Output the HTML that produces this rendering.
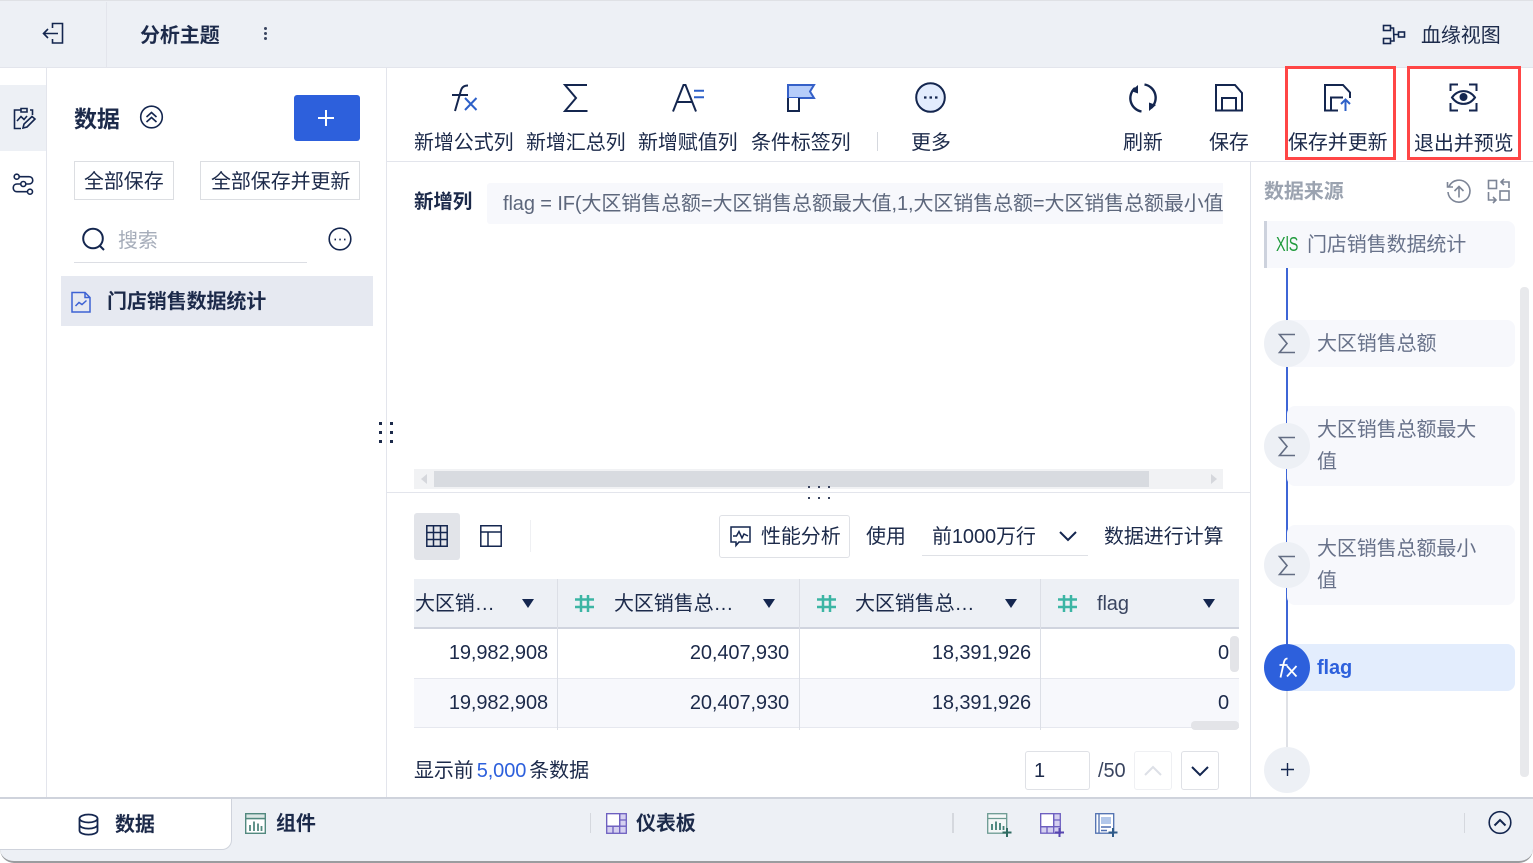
<!DOCTYPE html>
<html lang="zh"><head><meta charset="utf-8"><title>分析主题</title>
<style>
html,body{margin:0;padding:0;background:#fff}
#p{position:relative;width:1533px;height:863px;overflow:hidden;font-family:"Liberation Sans","Noto Sans CJK SC",sans-serif;font-size:20px;color:#1c2a4a}
.a{position:absolute;box-sizing:border-box}
.t{position:absolute;white-space:nowrap;line-height:30px;height:30px;margin-top:1px;letter-spacing:-.1px}
.b{font-weight:bold}
svg{position:absolute;overflow:visible;fill:none;stroke:#14264f;stroke-width:1.6}
.g{color:#68728a}
</style></head><body><div id="p">

<!-- top bar -->
<div class="a" style="left:0;top:0;width:1533px;height:68px;background:#edf0f5;border-top:1px solid #dfe1e5;border-bottom:1px solid #e3e5ec"></div>
<div class="a" style="left:106px;top:2px;width:1px;height:65px;background:#e3e5ec"></div>
<svg style="left:40px;top:20px" width="26" height="26"><path d="M12.500 8V3.500H22.500V23H12.500V19M3.500 13.500H18M8 9L3.500 13.500L8 18"/></svg>
<div class="t b" style="left:140px;top:20px">分析主题</div>
<div class="a" style="left:264px;top:27px;width:3px;height:3px;background:#3a4560;border-radius:50%"></div>
<div class="a" style="left:264px;top:32px;width:3px;height:3px;background:#3a4560;border-radius:50%"></div>
<div class="a" style="left:264px;top:37px;width:3px;height:3px;background:#3a4560;border-radius:50%"></div>
<svg style="left:1382px;top:24px" width="24" height="22"><rect x="1.500" y="1.500" width="7" height="5"/><rect x="1.500" y="14.500" width="7" height="5"/><rect x="16.500" y="8" width="6" height="5"/><path d="M8.500 4H11.500L12 17H8.500M12 10.500H16.500"/></svg>
<div class="t" style="left:1421px;top:20px">血缘视图</div>

<!-- left rail -->
<div class="a" style="left:46px;top:68px;width:1px;height:730px;background:#e3e5ec"></div>
<div class="a" style="left:0;top:85px;width:46px;height:66px;background:#edf0f5"></div>
<svg style="left:12px;top:106px" width="25" height="25"><path d="M9 4H2.500V22.500H9M18 4H20.500V9M9 2.500H15V6H9zM5 15L9 10.500L12 13.500L15 10M11 22L12 18L20 10.500L23 13L15 21Z"/></svg>
<svg style="left:12px;top:173px" width="24" height="23"><circle cx="4.700" cy="3.700" r="2.500"/><circle cx="18" cy="18.700" r="2.500"/><circle cx="11.300" cy="11" r="2.500"/><path d="M7.200 3.700H17C22 3.700 22 11 17 11H13.800M8.800 11H5C0 11 0 18.700 5 18.700H15.500"/></svg>

<!-- data panel -->
<div class="a" style="left:386px;top:68px;width:1px;height:730px;background:#e3e5ec"></div>
<div class="t b" style="left:74px;top:103px;font-size:23px">数据</div>
<svg style="left:139px;top:105px" width="24" height="24"><circle cx="12.500" cy="12" r="10.800"/><path d="M7.500 12L12.500 7.500L17.500 12M7.500 17L12.500 12.500L17.500 17"/></svg>
<div class="a" style="left:294px;top:95px;width:66px;height:46px;background:#2d60dc;border-radius:3px"></div>
<svg style="left:317px;top:109px;stroke:#fff;stroke-width:2" width="18" height="18"><path d="M1 9H17M9 1V17"/></svg>
<div class="a" style="left:74px;top:161px;width:100px;height:39px;border:1px solid #dcdee2"></div>
<div class="t" style="left:84px;top:166px">全部保存</div>
<div class="a" style="left:200px;top:161px;width:160px;height:39px;border:1px solid #dcdee2"></div>
<div class="t" style="left:211px;top:166px">全部保存并更新</div>
<svg style="left:81px;top:227px;stroke-width:2" width="24" height="24"><circle cx="12" cy="11.500" r="9.800"/><path d="M18.500 18.500L23 23"/></svg>
<div class="t" style="left:118px;top:225px;color:#a6adba">搜索</div>
<div class="a" style="left:74px;top:262px;width:233px;height:1px;background:#dcdee4"></div>
<svg style="left:328px;top:227px" width="24" height="24"><circle cx="12" cy="12" r="10.800"/><path d="M6.500 12.500H8M11.300 12.500H12.800M16 12.500H17.500" stroke-width="1.800"/></svg>
<div class="a" style="left:61px;top:276px;width:312px;height:50px;background:#e6e9f1"></div>
<svg style="left:70px;top:290px;stroke:#3d62d4;stroke-width:1.500" width="22" height="24"><path d="M2 2.500H15L20 7.500V22H2ZM15 2.500V7.500H20"/><path d="M5.500 16L9 12.500L12 14.500L16.500 10.500"/></svg>
<div class="t b" style="left:107px;top:286px">门店销售数据统计</div>
<div class="a" style="left:379px;top:422px;width:3px;height:3px;background:#1c2a4a"></div>
<div class="a" style="left:390px;top:422px;width:3px;height:3px;background:#1c2a4a"></div>
<div class="a" style="left:379px;top:431px;width:3px;height:3px;background:#1c2a4a"></div>
<div class="a" style="left:390px;top:431px;width:3px;height:3px;background:#1c2a4a"></div>
<div class="a" style="left:379px;top:440px;width:3px;height:3px;background:#1c2a4a"></div>
<div class="a" style="left:390px;top:440px;width:3px;height:3px;background:#1c2a4a"></div>

<!-- toolbar -->
<div class="a" style="left:387px;top:161px;width:1146px;height:1px;background:#e3e5ec"></div>
<svg style="left:449px;top:84px;stroke-width:2" width="30" height="30"><path d="M19 1.500C14 1.500 12.500 4 11.500 8L6 27M3 11H19"/><path d="M16 14L27.500 26M27.500 14L16 26" stroke="#2d60c8" stroke-width="2"/></svg>
<svg style="left:563px;top:84px;stroke-width:2" width="26" height="30"><path d="M24 1H2L13 14L2 27H24.500"/></svg>
<svg style="left:672px;top:84px;stroke-width:2" width="34" height="30"><path d="M1 27.500L11.500 1H13.500L24 27.500M5 18H20"/><path d="M22 6.700H32M22 13.300H32" stroke="#2d60c8" stroke-width="2"/></svg>
<svg style="left:786px;top:84px;stroke-width:2" width="30" height="30"><path d="M2 14V1H28L24 7.500L28 14Z" fill="#b6cdfa" stroke="#3560c8"/><path d="M2 14V27H13V14" stroke="#14264f" fill="#fff"/></svg>
<svg style="left:915px;top:82px;stroke-width:2" width="30" height="30"><circle cx="15.500" cy="15.500" r="14.300" fill="#e3ecfd"/><path d="M9 15.500H11.500M14.500 15.500H17M20 15.500H22.500" stroke-width="2.200"/></svg>
<div class="t" style="left:414px;top:127px">新增公式列</div>
<div class="t" style="left:526px;top:127px">新增汇总列</div>
<div class="t" style="left:638px;top:127px">新增赋值列</div>
<div class="t" style="left:751px;top:127px">条件标签列</div>
<div class="a" style="left:877px;top:132px;width:1px;height:19px;background:#d5d8de"></div>
<div class="t" style="left:911px;top:127px">更多</div>
<svg style="left:1127px;top:82px;stroke-width:2.400" width="32" height="32"><path d="M8 6A13.500 13.500 0 0 0 14.500 29.500M17.500 2.500A13.500 13.500 0 0 1 24 26"/><path d="M11 3V11.500L4 9Z M22 20.500V29L29 23Z" fill="#14264f" stroke="none"/></svg>
<svg style="left:1214px;top:83px;stroke-width:2" width="30" height="30"><path d="M2 2H21L28 10V27.500H2Z"/><path d="M8 27.500V15H22V27.500"/></svg>
<svg style="left:1323px;top:83px;stroke-width:2" width="32" height="30"><path d="M15 27.500H2V2H20L27 9.500V15"/><path d="M8 27.500V14.500H20"/><path d="M22.500 28V17M18 21L22.500 16.500L27 21" stroke="#2d60c8"/></svg>
<svg style="left:1449px;top:83px;stroke-width:2" width="30" height="30"><path d="M1.500 8V1.500H9M20 1.500H27.500V8M1.500 20V27.500H9M20 27.500H27.500V20"/><path d="M3 14.500C9 6 20 6 26 14.500C20 23 9 23 3 14.500Z"/><circle cx="14.500" cy="14" r="3" fill="#14264f"/></svg>
<div class="t" style="left:1123px;top:127px">刷新</div>
<div class="t" style="left:1209px;top:127px">保存</div>
<div class="a" style="left:1285px;top:66px;width:111px;height:94px;border:3px solid #ff4646"></div>
<div class="a" style="left:1407px;top:66px;width:114px;height:94px;border:3px solid #ff4646"></div>
<div class="t" style="left:1288px;top:127px">保存并更新</div>
<div class="t" style="left:1414px;top:128px">退出并预览</div>

<!-- formula -->
<div class="t b" style="left:414px;top:186px;font-size:19.500px">新增列</div>
<div class="a" style="left:487px;top:183px;width:736px;height:41px;background:#f7f8fc;border-radius:3px 0 0 3px;overflow:hidden"><div class="t" style="left:16px;top:5px;color:#5d677c">flag = IF(大区销售总额=大区销售总额最大值,1,大区销售总额=大区销售总额最小值</div></div>
<div class="a" style="left:414px;top:469px;width:809px;height:20px;background:#f1f2f4"></div>
<div class="a" style="left:434px;top:471px;width:715px;height:16px;background:#d8dbe0"></div>
<svg style="left:420px;top:473px;fill:#d5d7dc;stroke:none" width="8" height="12"><path d="M7 1V11L1 6Z"/></svg>
<svg style="left:1210px;top:473px;fill:#d5d7dc;stroke:none" width="8" height="12"><path d="M1 1V11L7 6Z"/></svg>
<div class="a" style="left:387px;top:492px;width:863px;height:1px;background:#e3e5ec"></div>
<svg style="left:808px;top:486px;stroke:#3a4560;stroke-width:2;stroke-dasharray:2 8" width="24" height="14"><path d="M0 1H24M0 12H24"/></svg>

<!-- right panel -->
<div class="a" style="left:1250px;top:162px;width:1px;height:635px;background:#e0e3ea"></div>
<div class="t b" style="left:1264px;top:176px;color:#9ba3b0">数据来源</div>
<svg style="left:1446px;top:179px;stroke:#7d8596" width="26" height="26"><path d="M3 7.500A11 11 0 1 1 2 13M1.500 3V8H7"/><path d="M13 18.500V7.500M8.500 12L13 7.500L17.500 12"/></svg>
<svg style="left:1487px;top:179px;stroke:#7d8596" width="24" height="24"><rect x="1.500" y="1.500" width="8" height="8"/><rect x="13" y="12" width="9" height="9"/><path d="M1.500 13V21H9M14 3H22V9M17 0L14 3L17 6M6 18L9 21L6 24"/></svg>
<div class="a" style="left:1264px;top:221px;width:251px;height:47px;background:#f7f8fc;border-left:3px solid #cdd2dd;border-radius:0 8px 8px 0"></div>
<div class="t" style="left:1276px;top:229px;font-size:20px;color:#1f9a3c;letter-spacing:0;transform:scaleX(.72);transform-origin:0 50%">XlS</div>
<div class="t g" style="left:1307px;top:229px">门店销售数据统计</div>
<div class="a" style="left:1286px;top:268px;width:2px;height:376px;background:#3d65d6"></div>
<div class="a" style="left:1287px;top:320px;width:228px;height:47px;background:#f7f8fc;border-radius:0 8px 8px 0"></div>
<div class="a" style="left:1287px;top:406px;width:228px;height:80px;background:#f7f8fc;border-radius:8px"></div>
<div class="a" style="left:1287px;top:525px;width:228px;height:80px;background:#f7f8fc;border-radius:8px"></div>
<div class="a" style="left:1264px;top:320px;width:46px;height:47px;background:#edf0f5;border-radius:50%"></div>
<div class="a" style="left:1264px;top:423px;width:46px;height:46px;background:#edf0f5;border-radius:50%"></div>
<div class="a" style="left:1264px;top:542px;width:46px;height:46px;background:#edf0f5;border-radius:50%"></div>
<svg style="left:1278px;top:333px;stroke:#636d83" width="18" height="21"><path d="M17 1.500H1.500L9 10.500L1.500 19.500H17"/></svg>
<svg style="left:1278px;top:436px;stroke:#636d83" width="18" height="21"><path d="M17 1.500H1.500L9 10.500L1.500 19.500H17"/></svg>
<svg style="left:1278px;top:555px;stroke:#636d83" width="18" height="21"><path d="M17 1.500H1.500L9 10.500L1.500 19.500H17"/></svg>
<div class="t g" style="left:1317px;top:328px">大区销售总额</div>
<div class="t g" style="left:1317px;top:414px">大区销售总额最大</div>
<div class="t g" style="left:1317px;top:446px">值</div>
<div class="t g" style="left:1317px;top:533px">大区销售总额最小</div>
<div class="t g" style="left:1317px;top:565px">值</div>
<div class="a" style="left:1287px;top:644px;width:228px;height:47px;background:#e3edfd;border-radius:0 8px 8px 0"></div>
<div class="a" style="left:1264px;top:644px;width:46px;height:47px;background:#2d60dc;border-radius:50%"></div>
<svg style="left:1277px;top:657px;stroke:#fff;stroke-width:1.800" width="22" height="22"><path d="M10.500 1.500C8.500 1.500 7.500 3 7 5L3.500 20.500M2.500 8H10.500"/><path d="M10 9L19.500 19.500M19.500 9L10 19.500"/></svg>
<div class="t b" style="left:1317px;top:652px;color:#2d60dc">flag</div>
<div class="a" style="left:1286px;top:691px;width:2px;height:57px;background:#dfe1e6"></div>
<div class="a" style="left:1264px;top:747px;width:46px;height:46px;background:#edf0f5;border-radius:50%"></div>
<svg style="left:1281px;top:763px;stroke-width:1.400" width="13" height="13"><path d="M0 6.500H13M6.500 0V13"/></svg>
<div class="a" style="left:1520px;top:287px;width:9px;height:490px;background:#e8e9ec;border-radius:4px"></div>

<!-- table toolbar -->
<div class="a" style="left:414px;top:513px;width:46px;height:47px;background:#e2e4e9;border-radius:3px"></div>
<svg style="left:426px;top:525px;stroke-width:1.500" width="22" height="22"><path d="M.8 .8H21.200V21.200H.8ZM.8 7.500H21.200M.8 14.500H21.200M7.500 .8V21.200M14.500 .8V21.200"/></svg>
<svg style="left:480px;top:525px;stroke-width:1.500" width="22" height="22"><path d="M.8 .8H21.200V21.200H.8ZM.8 7H21.200M8 7V21.200"/></svg>
<div class="a" style="left:530px;top:520px;width:1px;height:32px;background:#eff0f3"></div>
<div class="a" style="left:719px;top:515px;width:131px;height:43px;border:1px solid #dfe1e6;border-radius:3px"></div>
<svg style="left:730px;top:526px;stroke-width:1.500" width="21" height="21"><path d="M1 1H20V16H9L6 19.500V16H1Z"/><path d="M3 10H6.500L9 5.500L12 12L14 8L18 10"/></svg>
<div class="t" style="left:761px;top:521px">性能分析</div>
<div class="t" style="left:866px;top:521px">使用</div>
<div class="t" style="left:932px;top:521px">前1000万行</div>
<svg style="left:1059px;top:530px;stroke-width:2" width="18" height="12"><path d="M1 2L9 10L17 2"/></svg>
<div class="a" style="left:922px;top:555px;width:166px;height:1px;background:#dfe1e6"></div>
<div class="t" style="left:1104px;top:521px">数据进行计算</div>

<!-- table -->
<div class="a" style="left:414px;top:579px;width:825px;height:48px;background:#edf0f5"></div>
<div class="a" style="left:414px;top:627px;width:825px;height:2px;background:#d0d4de"></div>
<div class="a" style="left:414px;top:629px;width:825px;height:50px;background:#fff;border-bottom:1px solid #e6e8ef"></div>
<div class="a" style="left:414px;top:679px;width:825px;height:49px;background:#f7f8fc;border-bottom:1px solid #e6e8ef"></div>
<div class="a" style="left:557px;top:579px;width:1px;height:151px;background:#dcdfe6"></div>
<div class="a" style="left:799px;top:579px;width:1px;height:151px;background:#dcdfe6"></div>
<div class="a" style="left:1040px;top:579px;width:1px;height:151px;background:#dcdfe6"></div>
<div class="t" style="left:415px;top:588px">大区销…</div>
<div class="t" style="left:614px;top:588px">大区销售总…</div>
<div class="t" style="left:855px;top:588px">大区销售总…</div>
<div class="t" style="left:1097px;top:588px;color:#3a4560">flag</div>
<svg style="left:522px;top:599px;fill:#14264f;stroke:none" width="12" height="10"><path d="M0 0H12L6 9Z"/></svg>
<svg style="left:763px;top:599px;fill:#14264f;stroke:none" width="12" height="10"><path d="M0 0H12L6 9Z"/></svg>
<svg style="left:1005px;top:599px;fill:#14264f;stroke:none" width="12" height="10"><path d="M0 0H12L6 9Z"/></svg>
<svg style="left:1203px;top:599px;fill:#14264f;stroke:none" width="12" height="10"><path d="M0 0H12L6 9Z"/></svg>
<svg style="left:575px;top:595px;stroke:#3cb5a4;stroke-width:2.500" width="19" height="17"><path d="M0 4.500H19M0 12H19M6 0V17M13 0V17"/></svg>
<svg style="left:817px;top:595px;stroke:#3cb5a4;stroke-width:2.500" width="19" height="17"><path d="M0 4.500H19M0 12H19M6 0V17M13 0V17"/></svg>
<svg style="left:1058px;top:595px;stroke:#3cb5a4;stroke-width:2.500" width="19" height="17"><path d="M0 4.500H19M0 12H19M6 0V17M13 0V17"/></svg>
<div class="t" style="right:985px;top:637px">19,982,908</div>
<div class="t" style="right:744px;top:637px">20,407,930</div>
<div class="t" style="right:502px;top:637px">18,391,926</div>
<div class="t" style="right:304px;top:637px">0</div>
<div class="t" style="right:985px;top:687px">19,982,908</div>
<div class="t" style="right:744px;top:687px">20,407,930</div>
<div class="t" style="right:502px;top:687px">18,391,926</div>
<div class="t" style="right:304px;top:687px">0</div>
<div class="a" style="left:1230px;top:636px;width:9px;height:36px;background:#e3e4e8;border-radius:4px"></div>
<div class="a" style="left:1191px;top:721px;width:48px;height:9px;background:#e3e4e8;border-radius:4px"></div>

<!-- footer of table -->
<div class="t" style="left:414px;top:755px">显示前<span style="color:#2d60dc;margin:0 3px">5,000</span>条数据</div>
<div class="a" style="left:1025px;top:751px;width:65px;height:39px;border:1px solid #dfe1e6;border-radius:3px"></div>
<div class="t" style="left:1034px;top:755px">1</div>
<div class="t" style="left:1098px;top:755px;color:#3a4560">/50</div>
<div class="a" style="left:1134px;top:751px;width:38px;height:39px;border:1px solid #eff0f3;border-radius:3px"></div>
<svg style="left:1144px;top:765px;stroke:#dde0e7;stroke-width:2" width="18" height="12"><path d="M1 10L9 2L17 10"/></svg>
<div class="a" style="left:1181px;top:751px;width:38px;height:39px;border:1px solid #dfe1e6;border-radius:3px"></div>
<svg style="left:1191px;top:765px;stroke-width:2" width="18" height="12"><path d="M1 2L9 10L17 2"/></svg>

<!-- bottom bar -->
<div class="a" style="left:0;top:797px;width:1533px;height:66px;background:#edf0f5;border-top:2px solid #cfd3dc;border-bottom:2px solid #9a9c9f;border-radius:0 0 14px 14px"></div>
<div class="a" style="left:0;top:798px;width:232px;height:52px;background:#fff;border-top:1px solid #cfd3dc;border-right:1px solid #cfd3dc;border-bottom:1px solid #cfd3dc;border-radius:0 0 10px 0"></div>
<svg style="left:78px;top:813px;stroke-width:1.800" width="21" height="23"><ellipse cx="10.500" cy="5.500" rx="9" ry="4"/><path d="M1.500 5.500V17.500C1.500 23 19.500 23 19.500 17.500V5.500M1.500 11.500C1.500 17 19.500 17 19.500 11.500"/></svg>
<div class="t b" style="left:115px;top:809px">数据</div>
<svg style="left:245px;top:813px;stroke:#52897f;stroke-width:1.400" width="21" height="21"><rect x=".7" y=".7" width="19.600" height="19.600" fill="#fff"/><path d="M.7 5.500H20.300" /><rect x=".7" y=".7" width="19.600" height="4.800" fill="#dbe6e4"/><path d="M5 18V12M9 18V8.500M13 18V10.500M16.500 18V13" stroke-width="1.800"/></svg>
<div class="t b" style="left:276px;top:808px">组件</div>
<div class="a" style="left:590px;top:813px;width:1px;height:20px;background:#d5d8de"></div>
<svg style="left:606px;top:813px;stroke:#6d5fc0;stroke-width:1.300" width="21" height="21"><rect x=".7" y=".7" width="19.600" height="19.600" fill="#d5d0f0"/><rect x=".7" y=".7" width="13" height="12.500" fill="#fff"/><path d="M13.700 7H20.300M.7 13.200H20.300M7 13.200V20.300M13.700 .7V20.300"/></svg>
<div class="t b" style="left:636px;top:808px">仪表板</div>
<div class="a" style="left:952px;top:813px;width:2px;height:20px;background:#d5d8de"></div>
<svg style="left:987px;top:813px;stroke:#6b9a92;stroke-width:1.300" width="26" height="24"><rect x=".7" y=".7" width="19" height="19.500" fill="#f4f7f7"/><path d="M.7 5.500H19.700"/><path d="M5 17V11M9 17V8.500M13 17V10M16.500 17V13" stroke="#3f7e74" stroke-width="1.800"/><path d="M15.500 19.500H24.500M20 15V24" stroke="#2f6b62" stroke-width="2"/></svg>
<svg style="left:1040px;top:813px;stroke:#6d5fc0;stroke-width:1.300" width="26" height="24"><rect x=".7" y=".7" width="19.600" height="19.500" fill="#d5d0f0"/><rect x=".7" y=".7" width="13" height="13" fill="#fff"/><path d="M13.700 7H20.300M.7 13.700H20.300M7 13.700V20.200M13.700 .7V20.200"/><path d="M15 19.500H24M19.500 15V24" stroke="#5746b0" stroke-width="2"/></svg>
<svg style="left:1095px;top:813px;stroke:#4e6fb0;stroke-width:1.300" width="24" height="24"><rect x=".7" y=".7" width="18" height="19.500" fill="#fff"/><path d="M4 .7V20.200"/><rect x="6" y="4" width="10" height="7" fill="#b2c7ea" stroke="none"/><path d="M6 14H16M6 17.500H12" stroke-width="1.600"/><path d="M13.500 19.500H22.500M18 15V24" stroke="#2e5a88" stroke-width="2"/></svg>
<div class="a" style="left:1464px;top:813px;width:1px;height:20px;background:#d5d8de"></div>
<svg style="left:1488px;top:811px" width="24" height="24"><circle cx="12" cy="11.500" r="10.800"/><path d="M6.500 14.500L12 9L17.500 14.500" stroke-width="2"/></svg>
</div></body></html>
